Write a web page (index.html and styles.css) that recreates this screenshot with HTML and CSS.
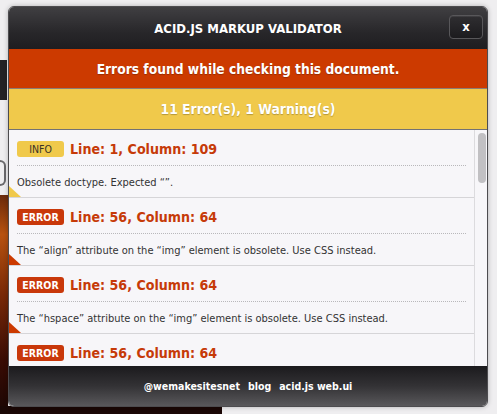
FILE: index.html
```html
<!DOCTYPE html>
<html lang="en">
<head>
<meta charset="utf-8">
<title>Acid.JS Markup Validator</title>
<link rel="stylesheet" href="styles.css">
</head>
<body>
<div class="behind" aria-hidden="true">
  <div class="behind-t"></div>
  <div class="behind-e"></div>
  <div class="behind-strip"></div>
  <div class="behind-bottom"></div>
</div>
<div class="dialog">
  <header class="titlebar">
    <h1 class="title">ACID.JS MARKUP VALIDATOR</h1>
    <button class="close" type="button">x</button>
  </header>
  <div class="status status-error">Errors found while checking this document.</div>
  <div class="status status-summary">11 Error(s), 1 Warning(s)</div>
  <div class="results">
    <ul class="list">
      <li class="item item-info">
        <div class="item-head"><span class="badge badge-info">INFO</span><span class="loc">Line: 1, Column: 109</span></div>
        <p class="msg">Obsolete doctype. Expected “”.</p>
      </li>
      <li class="item item-error">
        <div class="item-head"><span class="badge badge-error">ERROR</span><span class="loc">Line: 56, Column: 64</span></div>
        <p class="msg">The “align” attribute on the “img” element is obsolete. Use CSS instead.</p>
      </li>
      <li class="item item-error">
        <div class="item-head"><span class="badge badge-error">ERROR</span><span class="loc">Line: 56, Column: 64</span></div>
        <p class="msg">The “hspace” attribute on the “img” element is obsolete. Use CSS instead.</p>
      </li>
      <li class="item item-error">
        <div class="item-head"><span class="badge badge-error">ERROR</span><span class="loc">Line: 56, Column: 64</span></div>
        <p class="msg">The “vspace” attribute on the “img” element is obsolete. Use CSS instead.</p>
      </li>
    </ul>
    <div class="scrollbar"><div class="thumb"></div></div>
  </div>
  <footer class="footer">
    <a class="flink" href="#">@wemakesitesnet</a>
    <a class="flink" href="#">blog</a>
    <a class="flink" href="#">acid.js web.ui</a>
  </footer>
</div>
</body>
</html>
```
FILE: styles.css
```css
html, body {
  margin: 0;
  padding: 0;
}
body {
  width: 497px;
  height: 414px;
  overflow: hidden;
  position: relative;
  background: #efeef0;
  font-family: "DejaVu Sans Condensed", "DejaVu Sans", sans-serif;
}
.behind-t {
  position: absolute;
  left: 0;
  top: 60px;
  width: 7px;
  height: 40px;
  background: #232224;
}
.behind-e {
  position: absolute;
  left: 0;
  top: 160px;
  width: 6px;
  height: 26px;
  border: 2px solid #6a696c;
  border-left: none;
  border-radius: 0 12px 12px 0;
  box-sizing: border-box;
}
.behind-strip {
  position: absolute;
  left: 0;
  top: 195px;
  width: 8px;
  height: 219px;
  background: linear-gradient(180deg, #6a2a0c 0%, #b8520f 18%, #7a2a08 45%, #3a0c04 75%, #1a0604 100%);
}
.behind-bottom {
  position: absolute;
  left: 0;
  top: 406px;
  width: 222px;
  height: 8px;
  background: #1a0705;
}
.dialog {
  position: relative;
  margin: 6px 0 0 8px;
  width: 480px;
  height: 401px;
  box-sizing: border-box;
  border: 1px solid #4d4c4f;
  border-radius: 6px;
  overflow: hidden;
  display: flex;
  flex-direction: column;
  box-shadow: 0 0 5px rgba(0, 0, 0, 0.25);
  background: #f7f6f9;
}
.titlebar {
  position: relative;
  height: 42px;
  flex: none;
  display: flex;
  align-items: center;
  justify-content: center;
  background: linear-gradient(180deg, #403f42 0%, #28272a 60%, #1e1d20 100%);
}
.title {
  margin: 0;
  color: #fff;
  font-size: 13px;
  font-weight: bold;
}
.close {
  position: absolute;
  right: 4px;
  top: 8px;
  width: 34px;
  height: 24px;
  box-sizing: border-box;
  border: 1px solid #58575a;
  border-radius: 4px;
  background: linear-gradient(180deg, #2f2e31, #1c1b1e);
  box-shadow: inset 0 1px 0 rgba(255, 255, 255, 0.08);
  color: #fff;
  font-family: inherit;
  font-size: 13px;
  font-weight: bold;
  padding: 0 0 2px;
  line-height: 1;
}
.status {
  flex: none;
  box-sizing: border-box;
  display: flex;
  align-items: center;
  justify-content: center;
  color: #fff;
  font-weight: bold;
  text-shadow: 0 1px 1px rgba(0, 0, 0, 0.25);
}
.status-error {
  height: 40px;
  background: #cc3a00;
  border-bottom: 1px solid #8c7d78;
  font-size: 13.7px;
}
.status-summary {
  height: 41px;
  background: #f0c94b;
  border-bottom: 1px solid #737274;
  font-size: 13.8px;
}
.results {
  flex: none;
  height: 236px;
  display: flex;
  background: #f7f6f9;
}
.list {
  flex: 1;
  margin: 0;
  padding: 0;
  list-style: none;
  overflow: hidden;
}
.item {
  position: relative;
  height: 68px;
  box-sizing: border-box;
  padding: 11px 8px 0;
  border-bottom: 1px solid #d6d5d8;
}
.item::after {
  content: "";
  position: absolute;
  left: 0;
  bottom: 0;
  width: 0;
  height: 0;
  border-bottom: 11px solid transparent;
  border-right: 12px solid transparent;
}
.item-info::after {
  border-bottom-color: #f0c94b;
}
.item-error::after {
  border-bottom-color: #cc3a00;
}
.item-head {
  display: flex;
  align-items: center;
  gap: 6px;
  height: 16px;
  padding-bottom: 8px;
  border-bottom: 1px dotted #b9b8bb;
}
.badge {
  width: 47px;
  height: 16px;
  border-radius: 3px;
  display: flex;
  align-items: center;
  justify-content: center;
  font-size: 10.5px;
  flex: none;
}
.badge-info {
  background: #f0c94b;
  color: #3a3226;
}
.badge-error {
  background: #c9380a;
  color: #fff;
  font-weight: bold;
}
.loc {
  color: #c63a08;
  font-weight: bold;
  font-size: 14.1px;
  line-height: 16px;
}
.msg {
  margin: 10px 0 0;
  font-size: 11px;
  line-height: 14px;
  color: #333;
  white-space: nowrap;
}
.scrollbar {
  flex: none;
  width: 12px;
  border-left: 1px solid #dcdbde;
  position: relative;
}
.thumb {
  position: absolute;
  left: 3px;
  top: 3px;
  width: 8px;
  height: 50px;
  border-radius: 4px;
  background: #c1c0c3;
}
.footer {
  flex: none;
  height: 40px;
  display: flex;
  align-items: center;
  justify-content: center;
  gap: 8px;
  background: linear-gradient(180deg, #1b1a1d 0%, #333235 50%, #59585b 100%);
}
.flink {
  color: #fff;
  font-weight: bold;
  font-size: 10.5px;
  line-height: 14px;
  text-decoration: none;
  white-space: nowrap;
}
```
